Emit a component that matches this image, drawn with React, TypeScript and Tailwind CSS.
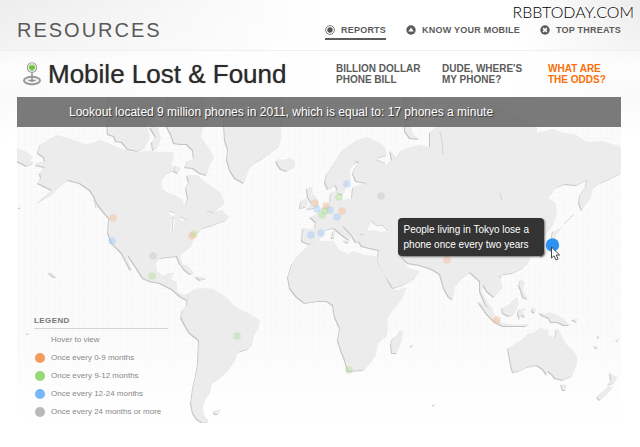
import { clsx } from 'clsx'

const navItems = [
  { label: 'REPORTS', icon: 'target', active: true },
  { label: 'KNOW YOUR MOBILE', icon: 'up', active: false },
  { label: 'TOP THREATS', icon: 'cross', active: false },
]

const reportLinks = [
  { lines: ['BILLION DOLLAR', 'PHONE BILL'], active: false },
  { lines: ['DUDE, WHERE\'S', 'MY PHONE?'], active: false },
  { lines: ['WHAT ARE', 'THE ODDS?'], active: true },
]

const legend = [
  { label: 'Hover to view', color: 'bg-transparent' },
  { label: 'Once every 0-9 months', color: 'bg-[#f79a5e]' },
  { label: 'Once every 9-12 months', color: 'bg-[#98d977]' },
  { label: 'Once every 12-24 months', color: 'bg-[#78b7f5]' },
  { label: 'Once every 24 months or more', color: 'bg-[#b9b9b9]' },
]

const ORANGE = '#f9b48c'
const GREEN = '#a9dd8c'
const BLUE = '#9cc8f5'
const GRAY = '#c4c4c4'

const cities = [
  { x: 113, y: 218, color: ORANGE },
  { x: 112, y: 241, color: BLUE },
  { x: 194, y: 234, color: GREEN },
  { x: 192, y: 236, color: ORANGE },
  { x: 153, y: 256, color: GRAY },
  { x: 152, y: 276, color: GREEN },
  { x: 237, y: 336, color: GREEN },
  { x: 349, y: 370, color: GREEN },
  { x: 315, y: 203, color: ORANGE },
  { x: 317, y: 209, color: BLUE },
  { x: 326, y: 206, color: ORANGE },
  { x: 330, y: 210, color: BLUE },
  { x: 325, y: 211, color: GREEN },
  { x: 322, y: 215, color: GREEN },
  { x: 342, y: 211, color: ORANGE },
  { x: 337, y: 217, color: BLUE },
  { x: 347, y: 184, color: BLUE },
  { x: 339, y: 197, color: GREEN },
  { x: 311, y: 235, color: BLUE },
  { x: 321, y: 233, color: BLUE },
  { x: 381, y: 196, color: GRAY },
  { x: 447, y: 260, color: ORANGE },
  { x: 497, y: 320, color: ORANGE },
]

const land = [
  // North America
  'M38 153L40 145L48 140L57 135L68 138L85 144L93 143L100 140L108 143L120 148L133 152L150 151L162 152L173 152L174 158L171 163L174 170L168 173L161 180L162 188L168 193L175 195L182 199L185 207L188 198L186 188L189 182L187 175L197 175L203 180L207 183L220 192L225 203L213 212L222 210L229 217L226 220L213 225L203 228L200 231L194 235L192 245L182 253L180 257L183 263L180 264L177 256L168 257L160 258L156 263L157 271L163 276L168 273L174 273L171 279L177 282L177 291L183 295L188 294L187 300L180 296L172 289L160 283L150 281L143 278L138 270L128 255L127 258L132 270L130 269L122 253L112 243L108 233L109 218L103 211L98 205L94 196L90 190L80 183L68 180L60 186L52 194L37 203L52 190L46 187L38 183L41 178L40 173L45 167L36 165L38 162L45 162L44 157Z',
  'M17 148L25 151L33 157L30 160L34 163L27 166L17 161Z',
  // Arctic islands
  'M108 97H160L158 112L147 125L150 138L145 147L138 151L128 149L122 142L116 141L114 136L108 134L107 122Z',
  'M150 127L158 127L161 138L158 147L153 150L152 142L156 137Z',
  'M167 97H205L208 118L203 127L201 137L209 148L214 158L210 164L207 175L200 173L193 168L185 167L188 161L194 158L193 150L187 144L181 144L174 143L171 134L167 127Z',
  'M175 165L181 168L178 173L174 171Z',
  // Greenland
  'M222 97H284L281 118L281 140L279 146L270 153L262 159L256 162L250 167L247 175L244 183L235 178L230 170L227 160L228 149L225 140L224 122Z',
  'M276 161L279 159L283 160L290 158L295 161L295 166L287 171L281 169L278 165Z',
  // South America
  'M188 293L194 290L200 288L213 289L221 294L227 298L233 305L241 310L250 314L260 320L259 327L254 335L252 345L248 349L238 352L235 361L229 369L223 375L218 379L212 383L210 393L205 400L203 407L204 415L209 421L203 423L197 419L193 413L191 403L193 388L196 375L198 363L199 340L190 333L185 325L181 317L183 310L187 305Z',
  'M214 411L221 409L219 414L215 414Z',
  // Africa
  'M309 245L318 241L334 241L338 249L348 254L353 251L365 255L376 256L377 262L383 272L388 283L392 289L398 290L407 287L402 299L393 310L387 318L388 327L387 335L378 343L376 355L370 363L364 370L348 371L345 360L341 350L338 340L340 328L335 317L333 305L327 301L318 301L305 303L297 297L290 288L288 277L292 264L299 255Z',
  'M401 330L403 333L402 340L397 353L392 353L391 344L393 338L398 335Z',
  // Europe and Asia
  'M303 228L309 229L315 228L316 222L310 217L315 215L322 208L330 202L331 193L337 190L338 197L343 200L352 198L353 187L360 185L367 183L356 181L353 173L355 168L359 162L356 161L350 170L351 180L347 186L343 195L338 193L336 185L328 189L325 182L327 174L332 167L338 158L343 150L357 140L367 137L378 142L385 147L387 155L377 158L386 165L392 160L390 150L397 158L401 151L410 147L420 145L430 147L430 132L440 124L446 116L470 108L492 105L510 112L537 125L537 133L553 129L563 133L575 134L587 142L603 141L621 147V173L610 179L600 183L593 188L591 197L582 210L579 203L580 195L586 186L587 180L577 185L565 184L557 187L548 198L556 203L557 215L553 225L543 237L533 253L528 263L523 268L513 273L504 274L499 276L503 287L494 297L487 291L483 284L482 291L487 301L494 311L492 312L485 303L480 291L480 281L470 272L462 278L455 286L453 299L449 297L444 288L440 274L432 269L420 265L408 263L400 256L408 268L420 271L415 278L403 285L393 288L385 276L377 261L379 250L370 248L362 246L356 237L365 235L360 234L360 241L356 242L351 234L342 225L345 231L352 237L349 240L341 234L334 228L325 230L322 237L315 243L309 244L302 241Z',
  // Britain and Ireland
  'M307 188L313 187L312 192L317 198L319 205L314 208L307 209L312 203L308 197Z',
  'M301 201L306 198L309 202L306 207L300 208Z',
  'M333 231L335 230L335 238L332 238Z',
  'M343 240L350 241L348 243Z',
  // Novaya Zemlya
  'M404 97H420L416 115L410 122L413 134L420 139L410 138L405 131Z',
  // Japan and Philippines
  'M553 231L560 229L564 225L557 234L555 237L556 246L549 250L542 257L540 254L550 247Z',
  'M521 279L525 282L523 290L528 299L523 297L521 290L519 285Z',
  'M500 275L503 275L501 278Z',
  // Indonesia and New Guinea
  'M478 301L485 305L494 313L499 321L503 323L515 325L529 324L526 326L503 326L495 322L487 314Z',
  'M502 308L510 304L517 297L519 304L514 314L509 316L503 313Z',
  'M519 309L527 308L522 311L526 317L521 315L520 319L518 314Z',
  'M533 307L536 309L535 313L532 311Z',
  'M539 312L545 314L550 312L558 315L564 319L570 325L564 325L558 322L551 322L549 318L542 315Z',
  'M572 319L578 319L576 322Z',
  // Australia, Tasmania, New Zealand
  'M508 348L515 344L523 339L528 334L535 332L540 328L549 330L548 335L555 338L557 328L561 334L565 343L572 349L577 356L577 364L572 376L563 380L555 378L552 374L548 371L547 375L543 369L537 365L527 367L519 371L513 372L511 365Z',
  'M561 384L567 385L566 390L563 390Z',
  'M610 372L613 375L618 377L614 383L608 385L611 380Z',
  'M609 386L613 387L607 394L600 400L597 397L603 391Z',
  // Scattered islands
  'M181 264L187 265L194 273L190 274L184 269Z',
  'M195 276L207 278L200 280Z',
  'M48 272L52 273L57 277L54 277Z',
  'M18 207L22 207L20 208Z',
  'M594 345L598 347L597 349Z',
  'M598 335L600 337L598 338Z',
  'M616 340L619 338L618 341Z',
  'M433 404L436 404L434 406Z',
  'M411 345L414 344L412 347Z',
  'M26 333L30 333L28 334Z',
]

// Inland water and narrow seas
const water = [
  'M371 222L376 226L384 226L388 231L380 232L374 230L367 231Z',
  'M169 211L175 213L174 216L170 215Z',
  'M172 219L175 219L173 232L170 232Z',
  'M180 217L187 220L181 221Z',
]

const coastLines = [
  'M371 221L377 226L382 225L388 231',
  'M169 211L175 213M173 217L172 232M180 217L187 220',
  'M500 193L502 200M440 132L442 140L443 154',
  'M103 211L94 200L96 208M122 256L131 270',
  'M564 224L574 214',
  'M207 211L214 213M358 161L354 164M376 160L385 163',
]

function NavIcon({ kind }: { kind: string }) {
  if (kind === 'target') {
    return (
      <svg className="w-2.5 h-2.5" viewBox="0 0 10 10">
        <circle cx="5" cy="5" r="4.4" fill="#fff" stroke="#777" strokeWidth="1" />
        <circle cx="5" cy="5" r="2.7" fill="#555" />
      </svg>
    )
  }
  return (
    <svg className="w-2.5 h-2.5" viewBox="0 0 10 10">
      <circle cx="5" cy="5" r="4.7" fill="#5b5b5b" />
      {kind === 'up' ? (
        <path d="M5 2.4L7.7 6.6H2.3Z" fill="#fff" />
      ) : (
        <path d="M3.1 3.1L6.9 6.9M6.9 3.1L3.1 6.9" stroke="#fff" strokeWidth="1.5" />
      )}
    </svg>
  )
}

function PinIcon() {
  return (
    <svg className="w-5 h-6 shrink-0" viewBox="0 0 20 24">
      <ellipse cx="10" cy="18.5" rx="8" ry="3.8" fill="#f4f4f4" stroke="#999" strokeWidth="2" />
      <path d="M10 9V20M6.5 18.5H13.5" stroke="#8c8c8c" strokeWidth="1.4" />
      <circle cx="10" cy="5.5" r="4.7" fill="#fff" stroke="#9b9b9b" strokeWidth="1.1" />
      <circle cx="10" cy="5.5" r="3.4" fill="#b5e08f" />
      <path d="M10 8.7L7.2 5.9C6.2 4 8.5 2.5 10 4C11.5 2.5 13.8 4 12.8 5.9Z" fill="#6fc03c" />
    </svg>
  )
}

function WorldMap() {
  return (
    <svg className="block w-full" viewBox="17 97 604 326" role="img" aria-label="World map">
      <defs>
        <pattern id="grid" width="6" height="6" patternUnits="userSpaceOnUse">
          <path d="M0 0.5H6M0.5 0V6" stroke="#f8f8f8" strokeWidth="1" />
        </pattern>
        <linearGradient id="fade" x1="0" y1="0" x2="0" y2="1">
          <stop offset="0.7" stopColor="#fff" stopOpacity="0" />
          <stop offset="1" stopColor="#fff" />
        </linearGradient>
        <filter id="relief" x="-5%" y="-5%" width="110%" height="110%">
          <feDropShadow dx="-1" dy="1" stdDeviation="0.7" floodColor="#999" floodOpacity="0.55" />
        </filter>
      </defs>
      <rect x="17" y="97" width="604" height="326" fill="#fbfbfb" />
      <rect x="17" y="97" width="604" height="326" fill="url(#grid)" />
      <rect x="17" y="97" width="604" height="326" fill="url(#fade)" />
      <g filter="url(#relief)" fill="#ececec" strokeLinejoin="round">
        {land.map((d) => (
          <path key={d} d={d} />
        ))}
      </g>
      {water.map((d) => (
        <path key={d} d={d} fill="#fafafa" />
      ))}
      {coastLines.map((d) => (
        <path key={d} d={d} fill="none" stroke="#d4d4d4" strokeWidth="1" />
      ))}
      {cities.map((city) => (
        <circle key={`${city.x}-${city.y}`} cx={city.x} cy={city.y} r="3.8" fill={city.color} opacity="0.42" />
      ))}
      <circle cx="552.5" cy="245" r="6.7" fill="#2b92f3" />
      <path
        d="M551.5 247V258L554 255.8L556 260L558 259L556.2 255H559.6Z"
        fill="#fff"
        stroke="#333"
        strokeWidth="0.9"
      />
    </svg>
  )
}

function Legend() {
  return (
    <div className="absolute left-[17px] bottom-0.5 w-[134px]">
      <h3 className="border-b border-[#d4d4d4] pb-0.5 text-[8px] leading-[10px] font-bold tracking-wider text-[#777]">
        LEGEND
      </h3>
      <ul className="pt-0.5">
        {legend.map((item) => (
          <li key={item.label} className="flex h-[18px] items-center gap-1.5 whitespace-nowrap text-[8px] text-[#888]">
            <span className={clsx('ml-px h-2.5 w-2.5 shrink-0 rounded-full', item.color)} />
            {item.label}
          </li>
        ))}
      </ul>
    </div>
  )
}

export default function App() {
  return (
    <div className="relative min-h-screen bg-white bg-[linear-gradient(to_bottom,rgba(255,255,255,0)_0,#fff_140px),linear-gradient(to_right,#ededed,#fff_50%,#fff_80%,#ededed)] font-['Liberation_Sans',Arial,sans-serif]">
      <div className="absolute right-1.5 top-0 font-[Lato,sans-serif] text-base font-light text-black [text-shadow:1px_1px_0_#fff]">
        RBBTODAY.COM
      </div>

      <header className="flex h-[51px] items-center justify-between border-b border-[#f0f0f0] pt-2.5 pl-[17px] pr-[19px]">
        <h1 className="text-xl leading-6 tracking-widest text-[#5a5a5a]">RESOURCES</h1>
        <nav className="flex gap-5">
          {navItems.map((item) => (
            <a
              key={item.label}
              href="#"
              className={clsx(
                'flex items-center gap-1.5 border-b-2 pt-1 pb-0.5 text-[9px] leading-3 font-bold tracking-wide text-[#5b5b5b]',
                item.active ? 'border-[#5b5b5b]' : 'border-transparent'
              )}
            >
              <NavIcon kind={item.icon} />
              {item.label}
            </a>
          ))}
        </nav>
      </header>

      <div className="flex h-[46px] items-center justify-between bg-linear-to-b from-white/40 via-white/80 to-transparent pl-[22px] pr-1.5">
        <h2 className="flex items-center gap-1.5 text-[26px] leading-8 text-[#2b2b2b] [text-shadow:0_0_1px_#777]">
          <PinIcon />
          Mobile Lost &amp; Found
        </h2>
        <nav className="flex gap-5">
          {reportLinks.map((link) => (
            <a
              key={link.lines[0]}
              href="#"
              className={clsx(
                'w-[86px] whitespace-nowrap text-[10px] leading-[11px] font-bold',
                link.active ? 'text-[#f9700a]' : 'text-[#5b5b5b]'
              )}
            >
              {link.lines[0]}
              <br />
              {link.lines[1]}
            </a>
          ))}
        </nav>
      </div>

      <main className="relative ml-[17px] mr-[19px]">
        <WorldMap />
        <p className="absolute inset-x-0 top-0 bg-[#6b6b6b]/90 pl-[52px] text-xs leading-[30px] text-white [text-shadow:1px_1px_1px_#333]">
          Lookout located 9 million phones in 2011, which is equal to: 17 phones a minute
        </p>
        <div
          role="tooltip"
          className="absolute left-[63%] top-[37%] w-[146px] rounded bg-[#333] px-1.5 py-1 text-[10px] leading-[15px] text-white shadow-[1px_1px_2px_rgba(0,0,0,0.5)]"
        >
          People living in Tokyo lose a phone once every two years
        </div>
        <Legend />
      </main>
    </div>
  )
}
